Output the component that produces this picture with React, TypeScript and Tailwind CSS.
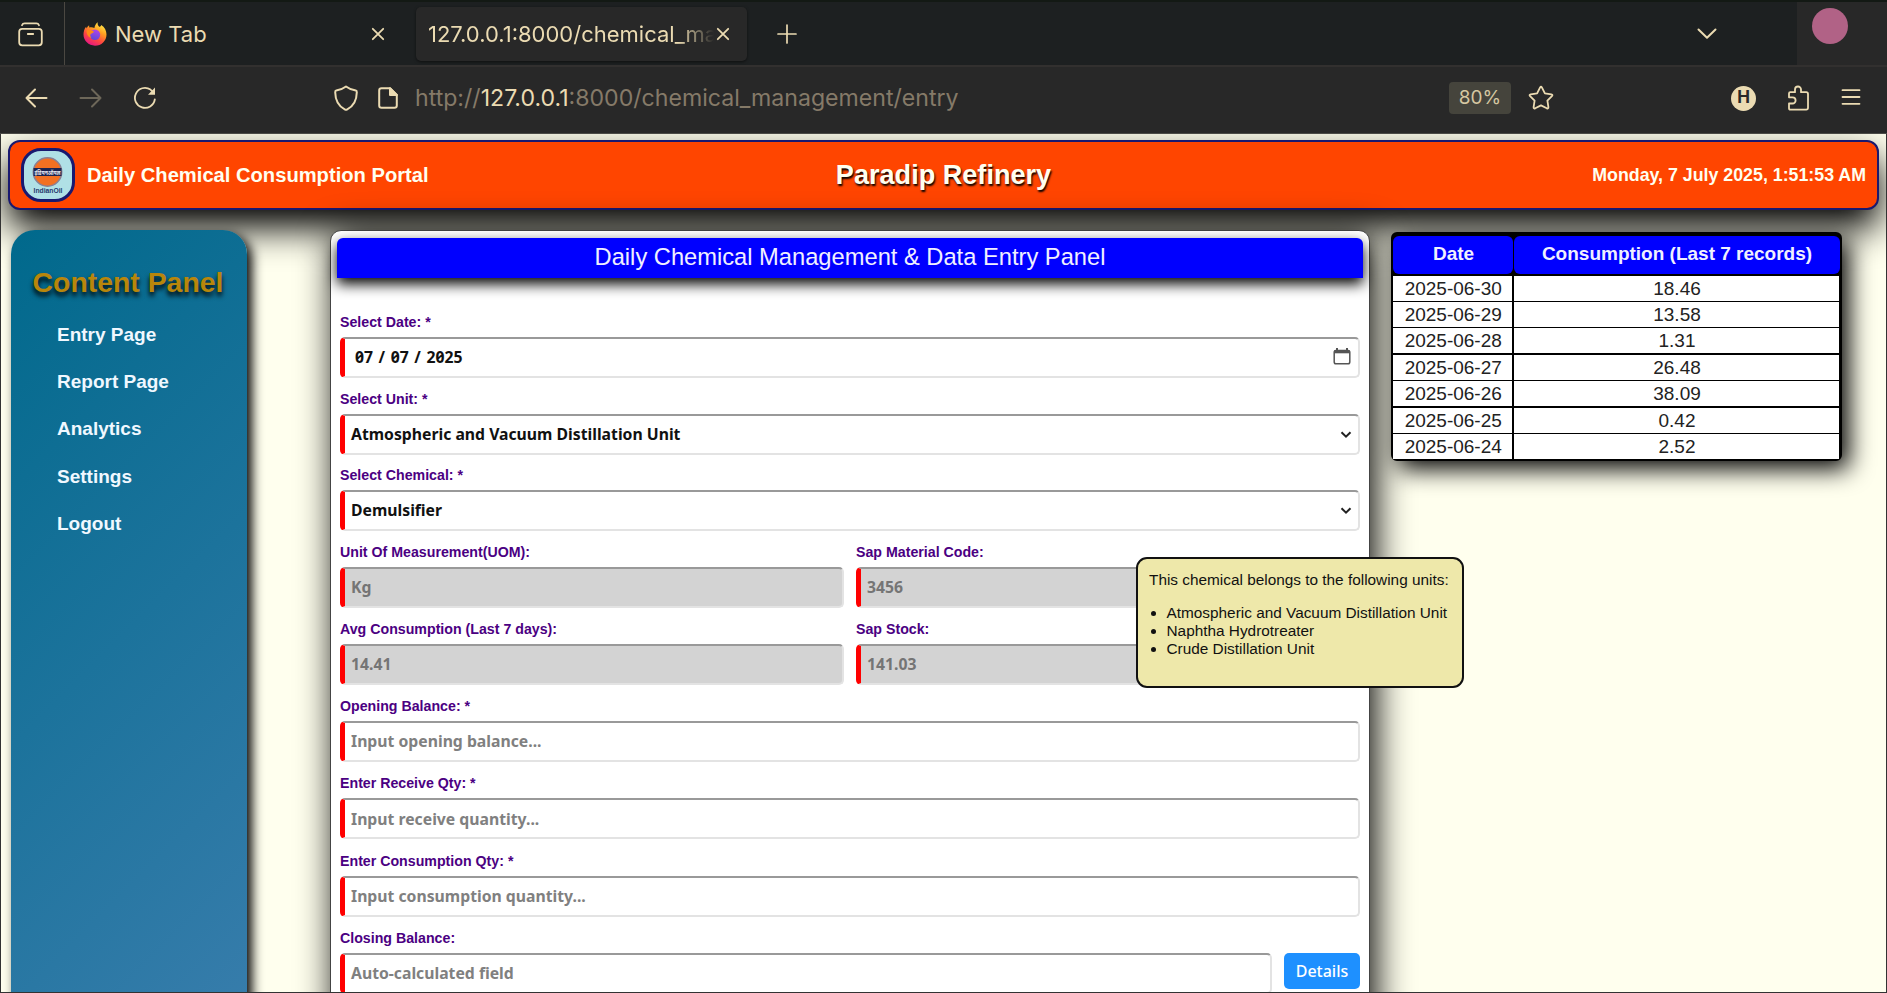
import React from "react";

const records: [string, string][] = [
  ["2025-06-30", "18.46"],
  ["2025-06-29", "13.58"],
  ["2025-06-28", "1.31"],
  ["2025-06-27", "26.48"],
  ["2025-06-26", "38.09"],
  ["2025-06-25", "0.42"],
  ["2025-06-24", "2.52"],
];

const navItems = ["Entry Page", "Report Page", "Analytics", "Settings", "Logout"];

function Close() {
  return (
    <svg width="14" height="14" viewBox="0 0 14 14" fill="none" stroke="#ebdbb2" strokeWidth="1.8" strokeLinecap="round">
      <path d="M1.800 1.800l10.400 10.400M12.200 1.800l-10.400 10.400" />
    </svg>
  );
}

function FirefoxLogo() {
  return (
    <svg width="24" height="24" viewBox="0 0 24 24">
      <defs>
        <linearGradient id="flame" x1="0.8" y1="0" x2="0.25" y2="1">
          <stop offset="0" stopColor="#fff44f" />
          <stop offset="0.35" stopColor="#ffa021" />
          <stop offset="0.65" stopColor="#ff4a3d" />
          <stop offset="1" stopColor="#e4108c" />
        </linearGradient>
        <linearGradient id="globe" x1="0.6" y1="0" x2="0.3" y2="1">
          <stop offset="0" stopColor="#b144e8" />
          <stop offset="1" stopColor="#5b48d8" />
        </linearGradient>
      </defs>
      <path d="M14.8 0.3c-.6 2 .2 3.400 1.400 4.500 1-.1 1.900-.9 2-1.900 3.400 2.100 5.300 5.600 5.300 9.500 0 6.300-5.100 11.300-11.500 11.300S.5 18.700.5 12.600c0-3 .9-6 2.600-7.900l.6 1.800C4.300 5 5 4.100 6.100 3.300l.2 2.100c1.800-.5 3.700-.2 5.100.6.400-2.300 1.500-4.500 3.400-5.700z" fill="url(#flame)" />
      <circle cx="12" cy="12.700" r="5.200" fill="url(#globe)" />
      <path d="M3.700 8.300c2.200-.8 5.200-.4 7.200 1.300-.2 1.600-2.200 1.800-3.100 2.500-.9.700-.6 2.700.5 3.600-2.900-.2-5.200-3.700-4.600-7.400z" fill="#ff8a16" />
    </svg>
  );
}

function TabBar() {
  return (
    <div className="flex h-[67px] items-center border-t-2 border-b-2 border-t-[#131914] border-b-[#32302f] bg-[#1d2021] text-[22px] text-[#ebdbb2]">
      <div className="flex h-full w-[65px] items-center border-r-[1.500px] border-[#4b4842] pt-px pl-[18px]">
        <svg width="25" height="25" viewBox="0 0 25 25" fill="none" stroke="#ebdbb2" strokeWidth="1.800" strokeLinecap="round">
          <rect x="1.200" y="6.800" width="22.600" height="16.500" rx="3" />
          <path d="M4 3.200c.5-1.300 1.300-1.900 2.600-1.900h11.800c1.300 0 2.100.6 2.600 1.900M9.800 12h5.400" />
        </svg>
      </div>
      <div className="ml-[18px] flex w-[302px] items-center pt-px">
        <FirefoxLogo />
        <span className="ml-[8px]">New Tab</span>
        <span className="ml-auto"><Close /></span>
      </div>
      <div className="ml-[31px] flex h-[54px] w-[331px] items-center rounded-[5px] bg-[#282828] pt-px pl-[12px] shadow-[0_1px_3px_#0008]">
        <div className="w-[286px] whitespace-nowrap mask-[linear-gradient(to_right,#000_250px,transparent_286px)]">
          127.0.0.1:8000/chemical_ma
        </div>
        <span className="ml-[2px]"><Close /></span>
      </div>
      <svg className="mt-px ml-[30px]" width="20" height="20" viewBox="0 0 20 20" fill="none" stroke="#ebdbb2" strokeWidth="1.700" strokeLinecap="round">
        <path d="M10 1v18M1 10h18" />
      </svg>
      <svg className="ml-auto" width="20" height="12" viewBox="0 0 20 12" fill="none" stroke="#ebdbb2" strokeWidth="2" strokeLinecap="round" strokeLinejoin="round">
        <path d="M1.500 1.500l8.500 8.300 8.500-8.300" />
      </svg>
      <div className="ml-[80px] flex h-full w-[90px] justify-start bg-[#282828] pt-[6px] pl-[15px]">
        <div className="size-9 rounded-full bg-[#b16286]" />
      </div>
    </div>
  );
}

function ToolBar() {
  return (
    <div className="flex h-[67px] items-center border-b border-[#4a4a46] bg-[#282828] pb-[4px] text-[23.120px] text-[#857a68]">
      <svg className="ml-[25px]" width="23" height="20" viewBox="0 0 23 20" fill="none" stroke="#ebdbb2" strokeWidth="2" strokeLinecap="round" strokeLinejoin="round">
        <path d="M10 1.500L1.500 10l8.500 8.500M1.500 10H21.500" />
      </svg>
      <svg className="ml-[31px]" width="23" height="20" viewBox="0 0 23 20" fill="none" stroke="#6d6759" strokeWidth="2" strokeLinecap="round" strokeLinejoin="round">
        <path d="M13 1.500l8.500 8.500-8.500 8.500M21.500 10H1.500" />
      </svg>
      <svg className="ml-[31px]" width="24" height="24" viewBox="0 0 24 24" fill="none" stroke="#ebdbb2" strokeWidth="1.800" strokeLinecap="round">
        <path d="M21.800 13.500A10 10 0 1 1 17.500 3.600L21 6.800" />
        <path d="M22 1.600V8.800H15z" fill="#ebdbb2" stroke="none" />
      </svg>
      <svg className="ml-[177px]" width="24" height="26" viewBox="0 0 24 26" fill="none" stroke="#ebdbb2" strokeWidth="2" strokeLinejoin="round">
        <path d="M12 1.500c3.200 2.400 6 3.600 9.800 4.100.9.100 1 .8 1 1.600-.1 7.500-3.300 14.100-9.900 17.400-.6.300-1.200.3-1.800 0C4.500 21.300 1.300 14.700 1.200 7.200c0-.8.100-1.500 1-1.600C6 5.100 8.800 3.900 12 1.500z" />
      </svg>
      <svg className="ml-[20px]" width="20" height="22" viewBox="0 0 20 22" fill="none" stroke="#ebdbb2" strokeWidth="2" strokeLinejoin="round">
        <path d="M12 1.200H3.500A2.300 2.300 0 0 0 1.200 3.500v15A2.300 2.300 0 0 0 3.500 20.800h13a2.300 2.300 0 0 0 2.300-2.300V8z" />
        <path d="M12 1.200V8h6.800z" fill="#ebdbb2" />
      </svg>
      <div className="ml-[17px] whitespace-nowrap">
        http://<span className="text-[#ebdbb2]">127.0.0.1</span>:8000/chemical_management/entry
      </div>
      <div className="ml-auto flex h-8 w-[62px] items-center justify-center rounded-[4px] bg-[#45443c] text-[19px] text-[#d5c7a1]">80%</div>
      <svg className="ml-[17px]" width="26" height="26" viewBox="0 0 26 26" fill="none" stroke="#ebdbb2" strokeWidth="1.800" strokeLinejoin="round">
        <path d="M12 2.600q1-1.700 2 0l2.900 5.700 6.400 1q1.900.4.600 1.800l-4.500 4.600 1 6.400q.1 1.900-1.600 1.200L13 20.400l-5.800 2.900q-1.700.7-1.600-1.200l1-6.400-4.500-4.600q-1.300-1.400.6-1.800l6.400-1z" />
      </svg>
      <div className="ml-[177px] flex size-[25px] items-center justify-center rounded-full bg-[#ebdbb2] text-[17px] font-bold text-[#282828]">H</div>
      <svg className="ml-[31px]" width="23" height="26" viewBox="0 0 23 26" fill="none" stroke="#ebdbb2" strokeWidth="1.800" strokeLinejoin="round">
        <path d="M2 12.300V8.500q0-1.300 1.300-1.300H8V4.500a3 3 0 0 1 6 0v2.700h5.200q1.800 0 1.800 1.800v13.800q0 1.800-1.800 1.800H3.300Q2 24.600 2 23.300V18.500h3.500a3.100 3.100 0 0 0 0-6.200z" />
      </svg>
      <svg className="mr-[26px] ml-[31px]" width="20" height="18" viewBox="0 0 20 18" stroke="#ebdbb2" strokeWidth="1.800" strokeLinecap="round">
        <path d="M1.500 1.200h17M1.500 8h17M1.500 14.800h17" />
      </svg>
    </div>
  );
}

function PortalHeader() {
  return (
    <header className="mx-[7px] mt-[6px] grid h-[70px] grid-cols-[1fr_auto_1fr] items-center rounded-[12px] border-2 border-[#191970] bg-[#ff4500] font-bold text-[#fffff0] shadow-[0_18px_36px_#000]">
      <div className="flex items-center">
        <div className="ml-[11px] flex size-[54px] items-center justify-center rounded-[20px] border-[3px] border-[#191970] bg-[#b0e0e6]">
          <svg width="48" height="48" viewBox="0 0 48 48">
            <circle cx="23.500" cy="21" r="14.200" fill="#f37022" stroke="#8a7f93" strokeWidth="1.500" />
            <rect x="9.500" y="17" width="28" height="8" fill="#1c2450" />
            <text x="23.500" y="23.600" textAnchor="middle" textLength="26" lengthAdjust="spacingAndGlyphs" fontSize="7" fontWeight="700" fill="#e8e8f0" fontFamily="Noto Sans, sans-serif">इंडियनऑयल</text>
            <text x="24" y="42.300" textAnchor="middle" textLength="29" lengthAdjust="spacingAndGlyphs" fontSize="7.500" fontWeight="700" fill="#26386c" fontFamily="Liberation Sans, sans-serif">IndianOil</text>
          </svg>
        </div>
        <span className="ml-[12px] text-[20.160px]">Daily Chemical Consumption Portal</span>
      </div>
      <h1 className="text-[27.100px] [text-shadow:1px_2px_2px_#000]">Paradip Refinery</h1>
      <div className="pr-[11px] text-right text-[17.800px]">Monday, 7 July 2025, 1:51:53 AM</div>
    </header>
  );
}

function Sidebar() {
  return (
    <aside className="ml-[9.500px] h-[1060px] w-[236px] shrink-0 rounded-[24px] bg-[linear-gradient(135deg,#00698c,#4682b4)] pt-[34px] shadow-[5px_5px_12px_#000]">
      <h2 className="pr-px text-center text-[28.400px] leading-[36px] font-bold text-[#b8860b] [text-shadow:0px_4px_5px_#000]">Content Panel</h2>
      <nav className="mt-[11px] flex flex-col pl-[46.500px] text-[19px] leading-[47.200px] font-bold text-[#f0f8ff]">
        {navItems.map((item) => (
          <a key={item}>{item}</a>
        ))}
      </nav>
    </aside>
  );
}

type Kind = "date" | "select" | "disabled" | "empty";

type FieldProps = {
  label: string;
  kind?: Kind;
  children: React.ReactNode;
};

const tones: Record<Kind, string> = {
  date: "bg-white text-[#111]",
  select: "bg-white text-[#111]",
  disabled: "bg-[#d3d3d3] text-[#757575]",
  empty: "bg-white text-[#808080]",
};

const pitches: Record<Kind, string> = {
  date: "h-[77px]",
  select: "h-[76.500px]",
  disabled: "h-[77.300px]",
  empty: "h-[77.400px]",
};

function Field({ label, kind = "empty", children }: FieldProps) {
  return (
    <div className={pitches[kind]}>
      <label className="block h-[28px] text-[14.200px] leading-[26px] font-bold whitespace-nowrap text-[#4b0082]">{label}</label>
      <div className={`flex h-[41px] items-center rounded-[5px] border-2 border-l-[5px] border-t-[#999] border-r-[#e3e3e3] border-b-[#e3e3e3] border-l-[#f00] px-[6px] pt-px font-['Noto_Sans',sans-serif] text-[15.760px] font-bold ${tones[kind]}`}>
        {kind === "date" ? <span className="ml-1 [font-feature-settings:'zero'] [word-spacing:1.500px]">{children}</span> : <span>{children}</span>}
        {kind === "date" && (
          <svg className="mr-px mb-[3px] ml-auto" width="18" height="17" viewBox="0 0 18 17" fill="none" stroke="#555" strokeWidth="1.500">
            <path d="M4 0v3M14 0v3" strokeWidth="2" />
            <rect x="1.200" y="2.500" width="15.600" height="13.300" rx="1.800" />
            <path d="M1.200 3.800h15.600" strokeWidth="3" />
          </svg>
        )}
        {kind === "select" && (
          <svg className="ml-auto" width="12" height="8" viewBox="0 0 12 8" fill="none" stroke="#222" strokeWidth="2">
            <path d="M1.500 1.200L6 5.700l4.500-4.500" />
          </svg>
        )}
      </div>
    </div>
  );
}

function UnitsTooltip() {
  return (
    <div className="absolute top-[326px] left-[804.500px] z-10 h-[131px] w-[328px] rounded-[11px] border-2 border-[#111] bg-[#eee8aa] pt-[12px] pl-[11.500px] text-[15.360px] leading-[18px] whitespace-nowrap text-[#111]">
      <p>This chemical belongs to the following units:</p>
      <ul className="mt-[15px] list-disc pl-[17.500px]">
        <li>Atmospheric and Vacuum Distillation Unit</li>
        <li>Naphtha Hydrotreater</li>
        <li>Crude Distillation Unit</li>
      </ul>
    </div>
  );
}

function EntryForm() {
  return (
    <main className="relative ml-[83.500px] h-[1000px] w-[1040px] shrink-0 rounded-[11px] border border-[#444] bg-white px-[6px] pt-[7px] shadow-[5px_5px_36px_#000]">
      <h2 className="h-[40px] rounded-t-[6px] bg-[#00f] text-center text-[23.700px] leading-[38px] text-[#f0f0ff] shadow-[0_6px_14px_#000]">
        Daily Chemical Management &amp; Data Entry Panel
      </h2>
      <div className="mt-[30.500px] pr-[3px] pl-[3px]">
        <Field label="Select Date: *" kind="date">07 / 07 / 2025</Field>
        <Field label="Select Unit: *" kind="select">Atmospheric and Vacuum Distillation Unit</Field>
        <Field label="Select Chemical: *" kind="select">Demulsifier</Field>
        <div className="grid grid-cols-2 gap-x-[12px]">
          <Field label="Unit Of Measurement(UOM):" kind="disabled">Kg</Field>
          <Field label="Sap Material Code:" kind="disabled">3456</Field>
          <Field label="Avg Consumption (Last 7 days):" kind="disabled">14.41</Field>
          <Field label="Sap Stock:" kind="disabled">141.03</Field>
        </div>
        <Field label="Opening Balance: *">Input opening balance...</Field>
        <Field label="Enter Receive Qty: *">Input receive quantity...</Field>
        <Field label="Enter Consumption Qty: *">Input consumption quantity...</Field>
        <div className="flex gap-[12px]">
          <div className="flex-1"><Field label="Closing Balance:">Auto-calculated field</Field></div>
          <button className="mt-[28px] h-[36px] w-[76px] rounded-[5px] bg-[#1e90ff] font-['Noto_Sans',sans-serif] text-[16px] font-medium text-white">Details</button>
        </div>
      </div>
      <UnitsTooltip />
    </main>
  );
}

function RecordsTable() {
  return (
    <section className="relative mt-[2px] ml-[21px] h-[229px] w-[451px] shrink-0 rounded-[6px] border-[2px] border-t-[4px] border-black bg-black text-center text-[19px] shadow-[7px_8px_24px_#000]">
      <div className="grid h-[38px] grid-cols-[120px_326px] gap-x-px leading-[36px] font-bold text-[#f0f0ff]">
        <div className="h-[38px] rounded-[6px] bg-[#00f] pl-px">Date</div>
        <div className="h-[38px] rounded-[6px] bg-[#00f]">Consumption (Last 7 records)</div>
      </div>
      {records.map(([date, qty]) => (
        <div key={date} className="grid h-[26.450px] grid-cols-[119px_325px] gap-x-[2px] pt-[1.500px] leading-[25px] text-[#222]">
          <div className="bg-white pl-[1.500px]">{date}</div>
          <div className="bg-white pl-px">{qty}</div>
        </div>
      ))}
    </section>
  );
}

export default function App() {
  return (
    <div className="flex h-[993px] w-[1887px] flex-col overflow-hidden bg-[#282828] font-['Inter',sans-serif]">
      <TabBar />
      <ToolBar />
      <div className="flex-1 overflow-hidden border-x border-b border-[#333] bg-[#ffffee] font-['Liberation_Sans',sans-serif]">
        <PortalHeader />
        <div className="mt-[20px] flex items-start">
          <Sidebar />
          <EntryForm />
          <RecordsTable />
        </div>
      </div>
    </div>
  );
}
